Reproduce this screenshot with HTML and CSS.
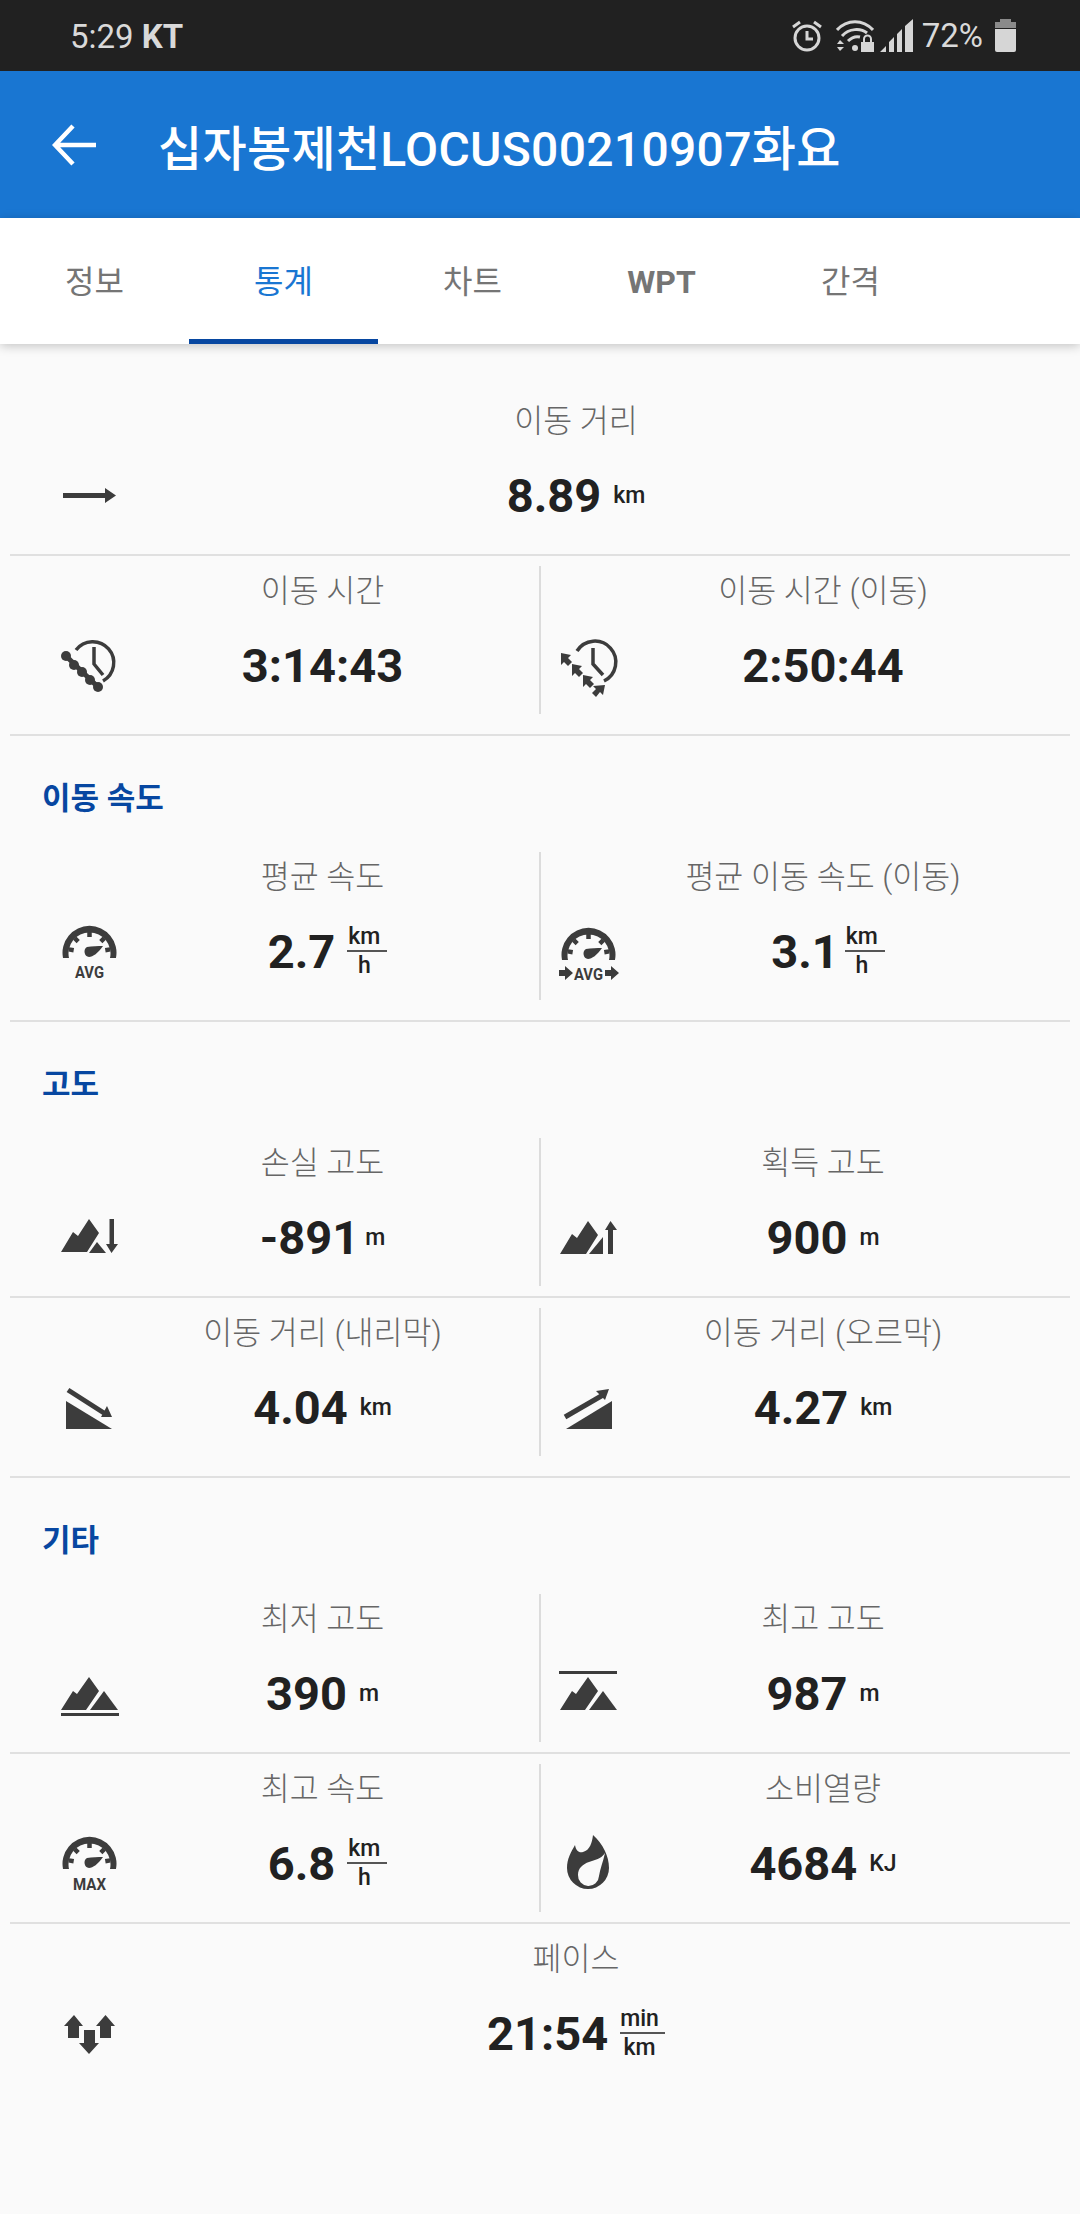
FILE: index.html
```html
<!DOCTYPE html>
<html lang="ko">
<head>
  <meta charset="UTF-8">
  <meta name="viewport" content="width=device-width, initial-scale=1.0">
  <title>십자봉제천LOCUS00210907화요</title>
  <link rel="stylesheet" href="styles.css">
</head>
<body>
<!-- shared icon parts -->
<svg class="defs" width="0" height="0">
  <defs>
    <symbol id="gauge" viewBox="0 0 60 40">
      <path d="M3 38A27 27 0 1 1 56 38H50A21 21 0 1 0 9 38Z"/>
      <path class="tick" d="M29.500 12V17M14.700 18.200L18.200 21.700M44.300 18.200L40.800 21.700M8.800 29.400L13.700 30.200M50.200 29.400L45.300 30.200"/>
      <path d="M43 26C38 33 33 37 29 37A5.500 5.500 0 0 1 27 27C32 26 38 26 43 26Z"/>
    </symbol>
    <symbol id="peaks" viewBox="0 0 60 34">
      <path d="M1 33L13 14L17 17L29 0L39 14L26 33Z"/>
      <path d="M30 33L44 14L58 33Z"/>
    </symbol>
    <symbol id="peaks-cut" viewBox="0 0 60 34">
      <path d="M1 33L13 13L18 17L29 0L39 14L27 33Z"/>
    </symbol>
  </defs>
</svg>

<div class="statusbar">
  <div class="status-left">5:29 <b>KT</b></div>
  <div class="status-right">
    <svg class="st-alarm" width="32" height="34" viewBox="0 0 32 34">
      <circle cx="16" cy="19" r="12" fill="none" stroke="#d6d6d6" stroke-width="3"/>
      <path d="M16 12V20H22M2 8L9 3M30 8L23 3" fill="none" stroke="#d6d6d6" stroke-width="3"/>
    </svg>
    <svg class="st-wifi" width="38" height="32" viewBox="0 0 38 32">
      <path d="M1 10C11 -1 27 -1 37 10M6 16C13 8 25 8 31 13M12 21C16 17 20 16 24 17" fill="none" stroke="#d6d6d6" stroke-width="3"/>
      <circle cx="19" cy="28" r="3" fill="#d6d6d6"/>
      <path d="M1 24L4 20L8 24ZM1 27H8L4 31Z" fill="#d6d6d6"/>
      <path d="M25 22H38V32H25Z" fill="#d6d6d6"/>
      <path d="M28 22V19A3.500 3.500 0 0 1 35 19V22" fill="none" stroke="#d6d6d6" stroke-width="2"/>
    </svg>
    <svg class="st-signal" width="33" height="33" viewBox="0 0 33 33">
      <path d="M0 33L6 27V33ZM9 33V23L14 18V33ZM17 33V15L22 10V33ZM25 33V7L33 0V33Z" fill="#d6d6d6"/>
    </svg>
    <span class="st-pct">72%</span>
    <svg class="st-batt" width="21" height="33" viewBox="0 0 21 33">
      <path d="M5 0H16V3H21V9H0V3H5Z" fill="#8a8a8a"/>
      <path d="M0 10H21V31Q21 33 19 33H2Q0 33 0 31Z" fill="#d6d6d6"/>
    </svg>
  </div>
</div>

<header class="appbar">
  <svg class="back" width="44" height="42" viewBox="0 0 44 42">
    <path d="M44 21H4M21 2L3 21L21 40" fill="none" stroke="#fff" stroke-width="4.500"/>
  </svg>
  <h1>십자봉제천LOCUS00210907화요</h1>
</header>

<nav class="tabs">
  <a class="tab">정보</a>
  <a class="tab active">통계</a>
  <a class="tab">차트</a>
  <a class="tab latin">WPT</a>
  <a class="tab">간격</a>
</nav>

<main class="stats">
  <div class="row first">
    <div class="cell full">
      <svg class="icon" viewBox="0 0 60 60"><path d="M3 29H45V24L56 31.500L45 39V34H3Z"/></svg>
      <div class="body">
        <div class="label">이동 거리</div>
        <div class="value"><span>8.89</span><span class="unit">km</span></div>
      </div>
    </div>
  </div>

  <div class="row tall">
    <div class="cell left">
      <svg class="icon" viewBox="0 0 60 60">
        <path class="line" d="M16 16A21 21 0 1 1 43 47M34 13V30L43 41"/>
        <path class="line wide" d="M6 22L38 53"/>
        <circle cx="6" cy="22" r="5"/><circle cx="14" cy="31" r="5"/><circle cx="22" cy="38" r="5"/><circle cx="30" cy="46" r="5"/><circle cx="38" cy="53" r="5"/>
      </svg>
      <div class="body">
        <div class="label">이동 시간</div>
        <div class="value"><span>3:14:43</span></div>
      </div>
    </div>
    <div class="cell right">
      <svg class="icon" viewBox="0 0 60 60">
        <path class="line" d="M18 17A21 21 0 1 1 45 47M34 14V30L44 41"/>
        <path d="M2 19L12 21L9 24L13 28L9 32L5 28L2 31Z"/>
        <path d="M13 30L23 32L20 35L24 39L20 43L16 39L13 42Z"/>
        <path d="M24 41L34 43L31 46L35 50L31 54L27 50L24 53Z"/>
        <path d="M46 51L44 61L41 58L37 63L33 59L37 55L34 52Z"/>
      </svg>
      <div class="body">
        <div class="label">이동 시간 (이동)</div>
        <div class="value"><span>2:50:44</span></div>
      </div>
    </div>
  </div>

  <h2 class="section">이동 속도</h2>
  <div class="row tall">
    <div class="cell left">
      <svg class="icon" viewBox="0 0 60 60">
        <use href="#gauge" x="0" y="0" width="60" height="40"/>
        <text class="badge" x="29.500" y="58" textLength="29" lengthAdjust="spacingAndGlyphs">AVG</text>
      </svg>
      <div class="body">
        <div class="label">평균 속도</div>
        <div class="value speed"><span>2.7</span><span class="frac"><i>km</i><i>h</i></span></div>
      </div>
    </div>
    <div class="cell right">
      <svg class="icon" viewBox="0 0 60 60">
        <use href="#gauge" x="0" y="2" width="60" height="40"/>
        <text class="badge" x="29.500" y="60" textLength="29" lengthAdjust="spacingAndGlyphs">AVG</text>
        <path d="M0 50H6V46L14 53L6 60V56H0ZM46 50H52V46L60 53L52 60V56H46Z"/>
      </svg>
      <div class="body">
        <div class="label">평균 이동 속도 (이동)</div>
        <div class="value speed tight"><span>3.1</span><span class="frac"><i>km</i><i>h</i></span></div>
      </div>
    </div>
  </div>

  <h2 class="section">고도</h2>
  <div class="row">
    <div class="cell left">
      <svg class="icon" viewBox="0 0 60 60">
        <use href="#peaks-cut" x="0" y="13" width="60" height="34"/>
        <path d="M29 47L37 36L46 47Z"/>
        <path d="M49.500 13H54V38H58L51.500 47L46 38H49.500Z"/>
      </svg>
      <div class="body">
        <div class="label">손실 고도</div>
        <div class="value tight"><span>-891</span><span class="unit">m</span></div>
      </div>
    </div>
    <div class="cell right">
      <svg class="icon" viewBox="0 0 60 60">
        <use href="#peaks-cut" x="0" y="15" width="60" height="34"/>
        <path d="M30 48L44 31V48Z"/>
        <path d="M49 48V24H46L51.500 15L58 24H54V48Z"/>
      </svg>
      <div class="body">
        <div class="label">획득 고도</div>
        <div class="value"><span>900</span><span class="unit">m</span></div>
      </div>
    </div>
  </div>
  <div class="row tall">
    <div class="cell left">
      <svg class="icon" viewBox="0 0 60 60">
        <path d="M6 25V53H52Z"/>
        <path class="line wide" d="M8 14L44 37"/>
        <path d="M52 41H41L47 30Z"/>
      </svg>
      <div class="body">
        <div class="label">이동 거리 (내리막)</div>
        <div class="value"><span>4.04</span><span class="unit">km</span></div>
      </div>
    </div>
    <div class="cell right">
      <svg class="icon" viewBox="0 0 60 60">
        <path d="M7 53H53V25Z"/>
        <path class="line wide" d="M6 41L44 19"/>
        <path d="M50 13L37 15L46 24Z"/>
      </svg>
      <div class="body">
        <div class="label">이동 거리 (오르막)</div>
        <div class="value"><span>4.27</span><span class="unit">km</span></div>
      </div>
    </div>
  </div>

  <h2 class="section">기타</h2>
  <div class="row">
    <div class="cell left">
      <svg class="icon" viewBox="0 0 60 60">
        <use href="#peaks" x="0" y="15" width="60" height="34"/>
        <path d="M1 51H59V54H1Z"/>
      </svg>
      <div class="body">
        <div class="label">최저 고도</div>
        <div class="value"><span>390</span><span class="unit">m</span></div>
      </div>
    </div>
    <div class="cell right">
      <svg class="icon" viewBox="0 0 60 60">
        <path d="M0 9H58V12H0Z"/>
        <use href="#peaks" x="0" y="15" width="60" height="34"/>
      </svg>
      <div class="body">
        <div class="label">최고 고도</div>
        <div class="value"><span>987</span><span class="unit">m</span></div>
      </div>
    </div>
  </div>
  <div class="row">
    <div class="cell left">
      <svg class="icon" viewBox="0 0 60 60">
        <use href="#gauge" x="0" y="-1" width="60" height="40"/>
        <text class="badge" x="29.500" y="58" textLength="33" lengthAdjust="spacingAndGlyphs">MAX</text>
      </svg>
      <div class="body">
        <div class="label">최고 속도</div>
        <div class="value speed"><span>6.8</span><span class="frac"><i>km</i><i>h</i></span></div>
      </div>
    </div>
    <div class="cell right">
      <svg class="icon" viewBox="0 0 60 60">
        <path fill-rule="evenodd" d="M34 3C44 12 50 24 50 36A21 21 0 0 1 8 36C8 27 12 20 16 13C17 19 20 21 24 20C31 18 33 11 34 3ZM46 21C42 27 36 28 30 30C24 32 19 36 19 43A10.500 10.500 0 0 0 40 44C41 37 44 30 46 21Z"/>
      </svg>
      <div class="body">
        <div class="label">소비열량</div>
        <div class="value"><span>4684</span><span class="unit">KJ</span></div>
      </div>
    </div>
  </div>

  <div class="row last">
    <div class="cell full">
      <svg class="icon" viewBox="0 0 60 60">
        <path d="M14 13L23 24H19V36H8V24H4Z"/>
        <path d="M45.500 13L55 24H51V36H40V24H36Z"/>
        <path d="M24 28H35V41H39L29 52L19 41H24Z"/>
      </svg>
      <div class="body">
        <div class="label">페이스</div>
        <div class="value"><span>21:54</span><span class="frac"><i>min</i><i>km</i></span></div>
      </div>
    </div>
  </div>
</main>
</body>
</html>
```
FILE: styles.css
```css
* {
  box-sizing: border-box;
}
html, body {
  margin: 0;
  padding: 0;
}
body {
  width: 1080px;
  height: 2214px;
  overflow: hidden;
  background-color: #fafafa;
  font-family: Roboto, "Noto Sans CJK KR", sans-serif;
}
.defs {
  display: block;
  height: 0;
}
.statusbar {
  height: 71px;
  background-color: #212121;
  color: #d9d9d9;
  display: flex;
  justify-content: space-between;
  align-items: center;
  padding: 0 64px 0 70px;
  font-size: 33px;
}
.status-left {
  padding-top: 2px;
}
.status-left b {
  font-weight: 700;
}
.status-right {
  display: flex;
  align-items: center;
  height: 71px;
}
.st-alarm {
  margin-right: 13px;
}
.st-wifi {
  margin-right: 6px;
}
.st-signal {
  margin-right: 9px;
}
.st-pct {
  font-size: 33px;
  margin-right: 12px;
}
.appbar {
  height: 147px;
  background-color: #1976d2;
  display: flex;
  align-items: center;
  padding-left: 52px;
}
.back {
  flex: none;
  margin-right: 62px;
}
.appbar h1 {
  margin: 0;
  color: #fff;
  font-size: 48px;
  font-weight: 500;
  letter-spacing: 0.3px;
  white-space: nowrap;
}
.tabs {
  position: relative;
  height: 126px;
  background-color: #fff;
  display: flex;
  box-shadow: 0 2px 10px rgba(0, 0, 0, 0.22);
}
.tab {
  width: 189px;
  padding-top: 34px;
  text-align: center;
  font-size: 32px;
  font-weight: 400;
  line-height: 60px;
  color: #757575;
}
.tab.latin {
  font-weight: 700;
}
.tab.active {
  color: #1976d2;
  border-bottom: 5px solid #0747a1;
}
.stats {
  padding-top: 42px;
}
.row {
  display: flex;
  margin: 0 10px;
  padding: 10px 0;
  border-bottom: 2px solid #e0e0e0;
}
.row.tall {
  padding-bottom: 20px;
}
.row.last {
  border-bottom: none;
}
.cell {
  height: 148px;
  display: flex;
  align-items: flex-end;
  padding-bottom: 20px;
}
.cell.left {
  width: 529px;
  padding-left: 50px;
  padding-right: 14px;
}
.cell.right {
  width: 531px;
  padding-left: 18px;
  padding-right: 43px;
  border-left: 2px solid #dcdcdc;
}
.cell.full {
  width: 1060px;
  padding-left: 50px;
  padding-right: 38px;
}
.icon {
  flex: none;
  width: 60px;
  height: 60px;
  fill: #3c3c3c;
  overflow: visible;
}
.tick, .line {
  fill: none;
  stroke: #3c3c3c;
  stroke-width: 3.500;
}
.tick {
  stroke-width: 4.500;
}
.line.wide {
  stroke-width: 5;
}
.badge {
  font-family: Roboto, sans-serif;
  font-size: 17px;
  font-weight: 700;
  text-anchor: middle;
}
.body {
  flex: 1;
  align-self: flex-start;
  min-width: 0;
}
.label {
  height: 50px;
  line-height: 52px;
  text-align: center;
  font-size: 31.500px;
  font-weight: 300;
  color: #666;
  white-space: nowrap;
}
.value {
  margin-top: 24px;
  height: 50px;
  display: flex;
  justify-content: center;
  align-items: center;
  gap: 12px;
  font-size: 47px;
  font-weight: 700;
  color: #212121;
}
.value.tight {
  gap: 6px;
}
.value.speed {
  padding-left: 10px;
}
.unit {
  font-size: 23px;
  font-weight: 500;
}
.frac {
  display: flex;
  flex-direction: column;
  font-size: 23px;
  font-weight: 500;
  line-height: 27px;
}
.frac i {
  font-style: normal;
  min-width: 40px;
  padding-right: 6px;
  text-align: center;
}
.frac i:first-child {
  border-bottom: 2px solid #555;
}
.section {
  height: 106px;
  margin: 0;
  padding: 39px 0 0 42px;
  font-size: 31px;
  line-height: 48px;
  font-weight: 700;
  color: #0747a1;
}
```
